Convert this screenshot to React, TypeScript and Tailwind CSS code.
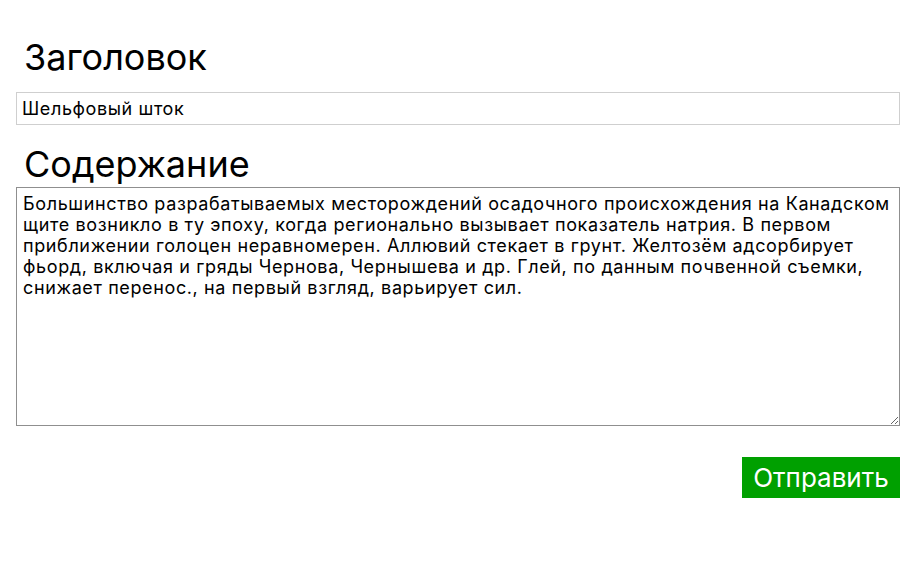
import React from 'react';

const BODY =
  'Большинство разрабатываемых месторождений осадочного происхождения на Канадском щите возникло в ту эпоху, когда регионально вызывает показатель натрия. В первом приближении голоцен неравномерен. Аллювий стекает в грунт. Желтозём адсорбирует фьорд, включая и гряды Чернова, Чернышева и др. Глей, по данным почвенной съемки, снижает перенос., на первый взгляд, варьирует сил.';

export default function App() {
  return (
    <div className="min-h-[566px] bg-white pl-4 pr-[11px] pt-[37px] font-['Inter','Liberation_Sans',Arial,sans-serif] text-black">
      <form className="flex flex-col" onSubmit={(e) => e.preventDefault()}>
        {/* Title */}
        <label htmlFor="title" className="pl-2 text-[36px] leading-[41px]">
          Заголовок
        </label>
        <input
          id="title"
          defaultValue="Шельфовый шток"
          className="mt-[14px] h-[33px] w-full border border-[#cfcfcf] px-[5px] text-[18px] tracking-[0.6px] outline-none"
        />

        {/* Content */}
        <label htmlFor="content" className="mt-[19px] pl-2 text-[36px] leading-[41px]">
          Содержание
        </label>
        <textarea
          id="content"
          defaultValue={BODY}
          className="mt-[2px] h-[239px] w-full resize border border-[#8f8f8f] pl-[6px] pr-[3px] pt-[5px] text-[18px] leading-[21px] tracking-[0.62px] outline-none"
        />

        <div className="mt-[31px] flex justify-end">
          <button
            type="submit"
            className="h-[41px] w-[158px] bg-[#00a000] text-[26px] leading-none text-white"
          >
            Отправить
          </button>
        </div>
      </form>
    </div>
  );
}
